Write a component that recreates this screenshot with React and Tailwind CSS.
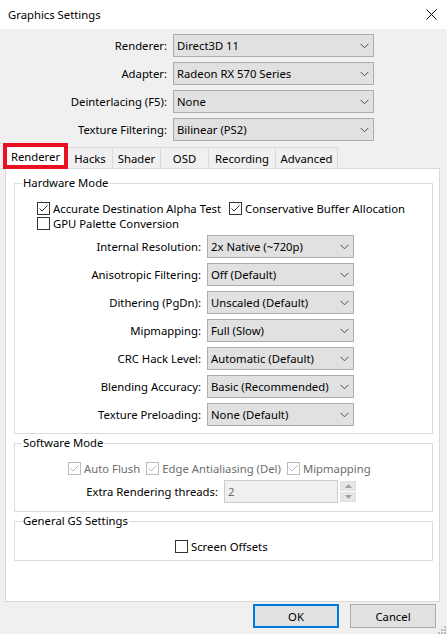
import React from "react";

const font = { fontFamily: '"Noto Sans", "Open Sans", sans-serif' };

function Chevron({ className = "" }) {
  return (
    <svg width="9" height="6" viewBox="0 0 9 6" className={className}>
      <path d="M0.5 0.8 L4.5 4.8 L8.5 0.8" fill="none" stroke="#505050" strokeWidth="1" />
    </svg>
  );
}

function Combo({ value, width }) {
  return (
    <div
      className="h-[23px] border border-[#adadad] bg-[#e1e1e1] flex items-center justify-between pl-[3px] pr-[4px]"
      style={{ width }}
    >
      <span className="text-black">{value}</span>
      <Chevron />
    </div>
  );
}

function Check({ checked, disabled, label }) {
  const box = disabled ? "border-[#bcbcbc]" : "border-[#333333]";
  const mark = disabled ? "#bcbcbc" : "#333333";
  return (
    <div className="flex items-center h-[15px]">
      <div className={`w-[13px] h-[13px] border bg-white flex items-center justify-center ${box}`}>
        {checked && (
          <svg width="11" height="11" viewBox="0 0 11 11">
            <path d="M1.5 5.5 L4 8 L9.5 2.5" fill="none" stroke={mark} strokeWidth="1" />
          </svg>
        )}
      </div>
      <span className={`ml-[3px] ${disabled ? "text-[#6d6d6d]" : "text-black"}`}>{label}</span>
    </div>
  );
}

function Group({ title, className = "", children }) {
  return (
    <fieldset className={`border border-[#dcdcdc] w-[419px] ml-[8px] ${className}`}>
      <legend className="ml-[7px] px-[1px] leading-[16px] text-black">{title}</legend>
      {children}
    </fieldset>
  );
}

const topRows = [
  ["Renderer:", "Direct3D 11"],
  ["Adapter:", "Radeon RX 570 Series"],
  ["Deinterlacing (F5):", "None"],
  ["Texture Filtering:", "Bilinear (PS2)"],
];

const hwRows = [
  ["Internal Resolution:", "2x Native (~720p)"],
  ["Anisotropic Filtering:", "Off (Default)"],
  ["Dithering (PgDn):", "Unscaled (Default)"],
  ["Mipmapping:", "Full (Slow)"],
  ["CRC Hack Level:", "Automatic (Default)"],
  ["Blending Accuracy:", "Basic (Recommended)"],
  ["Texture Preloading:", "None (Default)"],
];

const tabs = [
  ["Hacks", 45],
  ["Shader", 48],
  ["OSD", 48],
  ["Recording", 67],
  ["Advanced", 62],
];

export default function App() {
  return (
    <div className="w-[447px] h-[634px] bg-[#f0f0f0] text-[11.3px] leading-[15px] overflow-hidden" style={font}>
      {/* title bar */}
      <div className="h-[29px] bg-white flex items-center justify-between pl-[8px] pr-[10px]">
        <span className="text-black">Graphics Settings</span>
        <svg width="11" height="11" viewBox="0 0 11 11">
          <path d="M0.5 0.5 L10.5 10.5 M10.5 0.5 L0.5 10.5" stroke="#000" strokeWidth="1" />
        </svg>
      </div>

      {/* top settings */}
      <div className="pt-[5px] flex flex-col gap-[5px]">
        {topRows.map(([l, v]) => (
          <div key={l} className="flex items-center">
            <div className="w-[167px] text-right text-black">{l}</div>
            <div className="ml-[6px]">
              <Combo value={v} width={201} />
            </div>
          </div>
        ))}
      </div>

      {/* tabs */}
      <div className="mt-[2px] flex items-end pl-[3px]">
        <div className="relative z-10 w-[65px] h-[26px] -mb-[1px] border-4 border-[#e81123] bg-white flex items-center justify-center text-black">
          Renderer
        </div>
        {tabs.map(([t, w]) => (
          <div
            key={t}
            className="h-[21px] border-t border-r border-[#d9d9d9] bg-[#f0f0f0] flex items-center justify-center text-black"
            style={{ width: w }}
          >
            {t}
          </div>
        ))}
      </div>

      {/* panel */}
      <div className="mx-[5px] w-[435px] h-[434px] border border-[#d9d9d9] bg-white pt-[6px]">
        <Group title="Hardware Mode" className="pb-[7px]">
          <div className="pl-[22px] pt-[10px] flex flex-col">
            <div className="flex items-center gap-[8px]">
              <Check checked label="Accurate Destination Alpha Test" />
              <Check checked label="Conservative Buffer Allocation" />
            </div>
            <Check label="GPU Palette Conversion" />
          </div>
          <div className="mt-[4px] flex flex-col gap-[5px]">
            {hwRows.map(([l, v]) => (
              <div key={l} className="flex items-center">
                <div className="w-[186px] text-right text-black">{l}</div>
                <div className="ml-[6px]">
                  <Combo value={v} width={147} />
                </div>
              </div>
            ))}
          </div>
        </Group>

        <Group title="Software Mode" className="mt-[1px] pb-[8px]">
          <div className="flex items-center pl-[53px] pt-[10px] gap-[6px]">
            <Check checked disabled label="Auto Flush" />
            <Check checked disabled label="Edge Antialiasing (Del)" />
            <Check checked disabled label="Mipmapping" />
          </div>
          <div className="mt-[4px] flex items-center">
            <div className="w-[203px] text-right text-black">Extra Rendering threads:</div>
            <div className="ml-[6px] w-[114px] h-[23px] border border-[#cccccc] bg-[#f0f0f0] flex items-center pl-[3px] text-[#6d6d6d]">
              2
            </div>
            <div className="ml-[2px] w-[16px] flex flex-col gap-[1px]">
              <div className="h-[10px] bg-[#e6e6e6] border border-[#e0e0e0] flex items-center justify-center">
                <svg width="7" height="4" viewBox="0 0 7 4"><path d="M0 4 L3.5 0 L7 4 Z" fill="#a0a0a0" /></svg>
              </div>
              <div className="h-[10px] bg-[#e6e6e6] border border-[#e0e0e0] flex items-center justify-center">
                <svg width="7" height="4" viewBox="0 0 7 4"><path d="M0 0 L3.5 4 L7 0 Z" fill="#a0a0a0" /></svg>
              </div>
            </div>
          </div>
        </Group>

        <Group title="General GS Settings" className="mt-[1px] pb-[6px]">
          <div className="flex justify-start pl-[160px] pt-[10px]">
            <Check label="Screen Offsets" />
          </div>
        </Group>
      </div>

      {/* buttons */}
      <div className="mt-[2px] flex justify-end items-start pr-[11px] gap-[11px] relative">
        <button className="w-[86px] h-[24px] border-2 border-[#0078d7] bg-[#e1e1e1] text-black">OK</button>
        <button className="w-[86px] h-[24px] border border-[#adadad] bg-[#e1e1e1] text-black">Cancel</button>
        <svg width="8" height="8" viewBox="0 0 8 8" className="absolute right-[1px] top-[22px]">
          <rect x="6" y="0" width="2" height="2" fill="#bcbcbc" />
          <rect x="3" y="3" width="2" height="2" fill="#bcbcbc" />
          <rect x="6" y="3" width="2" height="2" fill="#bcbcbc" />
          <rect x="0" y="6" width="2" height="2" fill="#bcbcbc" />
          <rect x="3" y="6" width="2" height="2" fill="#bcbcbc" />
          <rect x="6" y="6" width="2" height="2" fill="#bcbcbc" />
        </svg>
      </div>
    </div>
  );
}
